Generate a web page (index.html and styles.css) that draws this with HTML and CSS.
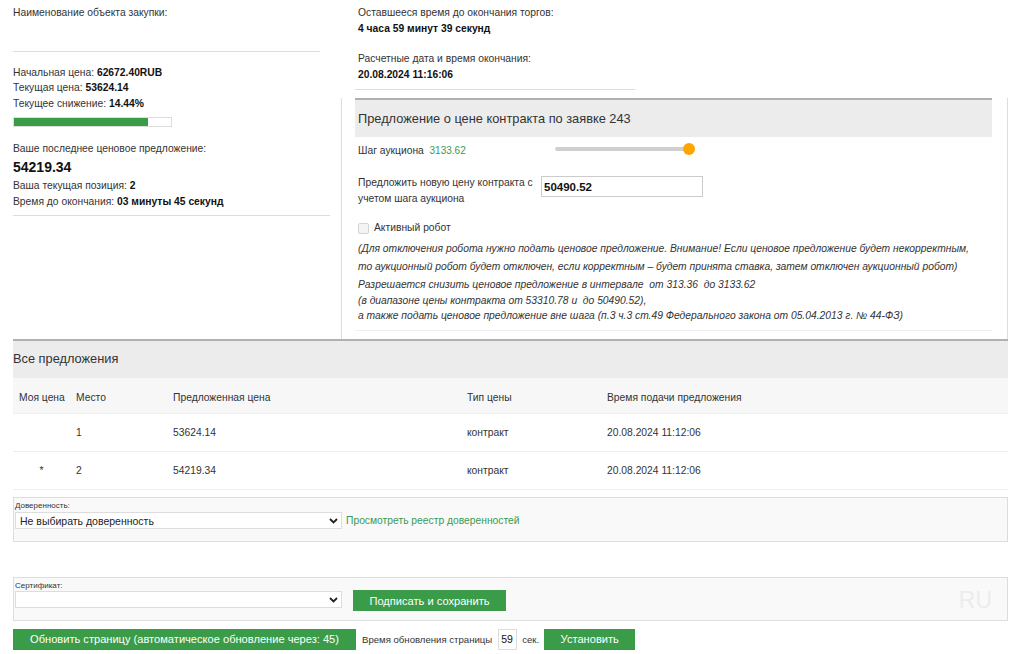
FILE: index.html
```html
<!DOCTYPE html>
<html lang="ru">
<head>
<meta charset="utf-8">
<title>Аукцион</title>
<link rel="stylesheet" href="styles.css">
</head>
<body>
<div class="page">
  <div class="top">
    <div class="left">
      <div class="line">Наименование объекта закупки:</div>
      <div class="name-space"></div>
      <hr class="sep sep1">
      <div class="prices">
        <div class="pline">Начальная цена: <b>62672.40RUB</b></div>
        <div class="pline">Текущая цена: <b>53624.14</b></div>
        <div class="pline">Текущее снижение: <b>14.44%</b></div>
      </div>
      <div class="progress"><div class="progress-fill" style="width:85.56%"></div></div>
      <div class="last-label">Ваше последнее ценовое предложение:</div>
      <div class="last-value">54219.34</div>
      <div class="pline pos">Ваша текущая позиция: <b>2</b></div>
      <div class="pline">Время до окончания: <b>03 минуты 45 секунд</b></div>
      <hr class="sep sep2">
    </div>
    <div class="right">
      <div class="info">
        <div class="line">Оставшееся время до окончания торгов:</div>
        <div class="line"><b>4 часа 59 минут 39 секунд</b></div>
        <div class="line gap">Расчетные дата и время окончания:</div>
        <div class="line"><b>20.08.2024 11:16:06</b></div>
        <hr class="sep sep3">
      </div>
      <div class="box">
        <div class="panel">
          <div class="panel-head">Предложение о цене контракта по заявке 243</div>
          <div class="step-row">
            <div class="step-label">Шаг аукциона&nbsp; <span class="green">3133.62</span></div>
            <div class="slider"><div class="track"></div><div class="thumb"></div></div>
          </div>
          <div class="offer-row">
            <div class="offer-label">Предложить новую цену контракта с учетом шага аукциона</div>
            <input class="offer-input" type="text" value="50490.52">
          </div>
          <label class="robot"><input type="checkbox" disabled> Активный робот</label>
          <p class="note n1">(Для отключения робота нужно подать ценовое предложение. Внимание! Если ценовое предложение будет некорректным,<br>то аукционный робот будет отключен, если корректным – будет принята ставка, затем отключен аукционный робот)</p>
          <p class="note n2">Разрешается снизить ценовое предложение в интервале&nbsp; от 313.36&nbsp; до 3133.62<br>(в диапазоне цены контракта от 53310.78 и&nbsp; до 50490.52),<br>а также подать ценовое предложение вне шага (п.3 ч.3 ст.49 Федерального закона от 05.04.2013 г. № 44-ФЗ)</p>
        </div>
      </div>
    </div>
  </div>

  <div class="offers">
    <div class="offers-head">Все предложения</div>
    <table class="tbl">
      <colgroup><col class="c1"><col class="c2"><col class="c3"><col class="c4"><col class="c5"></colgroup>
      <thead>
        <tr><th>Моя цена</th><th>Место</th><th>Предложенная цена</th><th>Тип цены</th><th>Время подачи предложения</th></tr>
      </thead>
      <tbody>
        <tr><td></td><td>1</td><td>53624.14</td><td>контракт</td><td>20.08.2024 11:12:06</td></tr>
        <tr><td class="star">*</td><td>2</td><td>54219.34</td><td>контракт</td><td>20.08.2024 11:12:06</td></tr>
      </tbody>
    </table>
  </div>

  <div class="panel-gray trust">
    <div class="small-label">Доверенность:</div>
    <div class="field-row">
      <div class="sel-wrap">
        <select class="sel"><option>Не выбирать доверенность</option></select>
        <svg class="chev" width="9" height="6" viewBox="0 0 9 6"><path d="M1 1 L4.5 4.5 L8 1" fill="none" stroke="#222" stroke-width="1.8"/></svg>
      </div>
      <a class="link" href="#">Просмотреть реестр доверенностей</a>
    </div>
  </div>

  <div class="panel-gray cert">
    <div class="small-label">Сертификат:</div>
    <div class="field-row">
      <div class="sel-wrap">
        <select class="sel"><option></option></select>
        <svg class="chev" width="9" height="6" viewBox="0 0 9 6"><path d="M1 1 L4.5 4.5 L8 1" fill="none" stroke="#222" stroke-width="1.8"/></svg>
      </div>
      <button class="btn sign">Подписать и сохранить</button>
      <span class="ru">RU</span>
    </div>
  </div>

  <div class="bottom">
    <button class="btn refresh">Обновить страницу (автоматическое обновление через: 45)</button>
    <span class="btext">Время обновления страницы</span>
    <input class="sec-input" type="text" value="59">
    <span class="btext sec">сек.</span>
    <button class="btn set">Установить</button>
  </div>
</div>
</body>
</html>
```

FILE: styles.css
```css
* { box-sizing: border-box; }
html, body { margin: 0; padding: 0; background: #fff; }
body {
  font-family: "Liberation Sans", Arial, sans-serif;
  font-size: 10.3px;
  color: #333;
}
b { color: #111; }
.page { padding: 5px 16px 0 13px; }

.top { display: flex; }
.left { width: 328px; flex: none; }
.right { flex: 1; }

.line { line-height: 15.5px; }
.name-space { height: 30px; }
.sep { border: 0; border-top: 1px solid #ddd; margin: 0; }
.sep1 { width: 307px; }
.prices { padding-top: 13px; }
.pline { line-height: 15.6px; }
.progress {
  width: 159px; height: 10px;
  border: 1px solid #ddd;
  margin: 6px 0 14px;
  background: #fff;
}
.progress-fill { height: 100%; background: #3a9c48; }
.last-label { line-height: 16px; }
.last-value { font-size: 14px; font-weight: bold; color: #111; line-height: 20px; }
.pos { margin-top: 1px; }
.sep2 { width: 317px; margin-top: 6px; }

.info { padding-left: 17px; }
.info .gap { margin-top: 15px; }
.sep3 { width: 280px; margin: 7px 0 0 -3px; }

.box {
  margin-top: 8px;
  border: 1px solid #ddd;
  border-top: 0;
  border-bottom: 0;
  padding: 0 15px 8px 13px;
  width: 667px;
}
.panel { border-top: 2px solid #b0b0b0; border-bottom: 1px solid #eee; padding-bottom: 6px; }
.panel-head {
  background: #ececec;
  height: 37px;
  line-height: 37px;
  font-size: 12.8px;
  color: #333;
  padding-left: 3px;
}
.step-row { display: flex; align-items: center; padding: 5px 0 0 3px; height: 22px; }
.step-label { width: 197px; }
.green { color: #3a9a55; font-size: 10px; }
.slider { position: relative; width: 140px; height: 14px; margin-top: -3px; }
.track { position: absolute; left: 0; right: 6px; top: 5px; height: 4px; background: #cfcfcf; border-radius: 2px; }
.thumb { position: absolute; right: 0; top: 1px; width: 12px; height: 12px; border-radius: 50%; background: #ffa500; }

.offer-row { display: flex; align-items: flex-start; padding: 16px 0 0 3px; }
.offer-label { width: 183px; line-height: 16px; }
.offer-input {
  width: 162px; height: 21px;
  border: 1px solid #ccc;
  font-family: inherit; font-size: 11.5px; font-weight: bold; color: #111;
  padding: 0 2px;
  margin-top: 1px;
}
.robot { display: flex; align-items: center; gap: 5px; padding: 14px 0 0 3px; line-height: 14px; color: #333; }
.robot input {
  appearance: none; -webkit-appearance: none;
  width: 11px; height: 11px; margin: 0;
  border: 1px solid #d4d4d4; border-radius: 2px; background: #f4f4f4;
}
.note { font-style: italic; margin: 0; padding-left: 3px; color: #333; }
.n1 { line-height: 18px; margin-top: 5px; }
.n2 { line-height: 15.6px; margin-top: 1px; }

.offers { border-top: 2px solid #b0b0b0; }
.offers-head {
  background: #ececec;
  height: 37px; line-height: 36px;
  font-size: 12.8px; color: #333;
}
.tbl { width: 100%; border-collapse: collapse; table-layout: fixed; }
.c1 { width: 57px; } .c2 { width: 97px; } .c3 { width: 294px; } .c4 { width: 140px; }
.tbl th, .tbl td { text-align: left; font-weight: normal; padding: 0 0 0 6px; border-bottom: 1px solid #eee; }
.tbl th { background: #f7f7f7; height: 36px; padding-top: 3px; }
.tbl td { height: 38px; }
.tbl td.star { text-align: center; padding: 0; }

.panel-gray {
  background: #f9f9f9;
  border: 1px solid #ddd;
  padding: 3px 1px 0;
}
.trust { margin-top: 7px; height: 45px; }
.cert { margin-top: 35px; height: 44px; }
.small-label { font-size: 8px; line-height: 10px; color: #333; }
.field-row { display: flex; align-items: center; margin-top: 1px; }
.sel-wrap { position: relative; width: 327px; height: 17px; }
.sel {
  appearance: none; -webkit-appearance: none;
  width: 100%; height: 100%;
  border: 1px solid #ddd; border-radius: 0;
  background: #fff;
  font-family: inherit; font-size: 10.5px; color: #222;
  padding: 0 0 0 4px;
}
.chev { position: absolute; right: 4px; top: 6px; pointer-events: none; }
.link { color: #3a9a55; text-decoration: none; margin-left: 4px; }
.btn {
  background: #3a9c48; color: #fff; border: 0; border-radius: 0;
  font-family: inherit; font-size: 11.1px;
  height: 21px; padding: 0;
}
.sign { width: 153px; margin-left: 11px; }
.cert .field-row { align-items: flex-start; margin-top: 0; }
.cert .sign { margin-top: -1px; }
.ru { margin-left: auto; margin-right: 14px; font-size: 23px; color: #ececec; margin-top: -4px; }

.bottom { display: flex; align-items: center; margin-top: 7px; height: 22px; }
.refresh { width: 343px; }
.btext { margin-left: 6px; font-size: 9.6px; }
.sec-input {
  width: 19px; height: 21px; margin-left: 6px;
  border: 1px solid #ddd;
  font-family: inherit; font-size: 10.5px; color: #111;
  padding: 0 0 0 2px;
}
.sec { margin-left: 5px; }
.set { width: 91px; margin-left: 5px; }
```
